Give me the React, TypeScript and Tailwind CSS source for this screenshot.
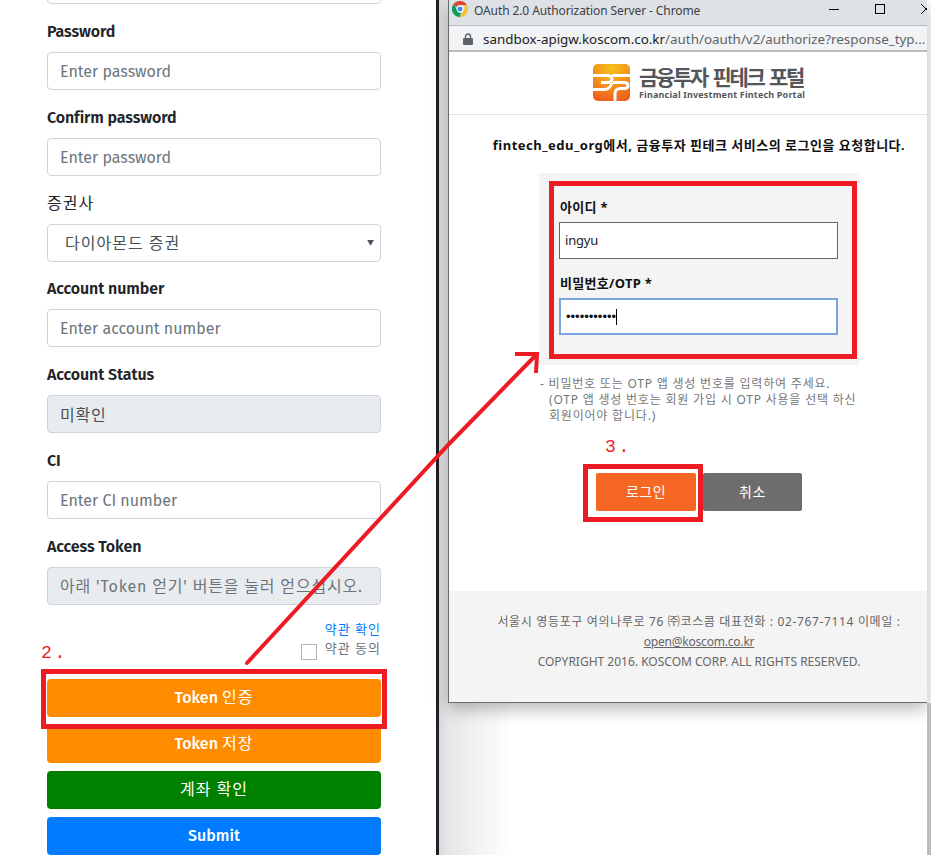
const fieldFont = "font-['Fira_Sans','Noto_Sans','Noto_Sans_CJK_KR',sans-serif]";

function Label({ children, plain }: { children: React.ReactNode; plain?: boolean }) {
  return (
    <label className={`block mb-2 h-6 text-base leading-6 text-[#212529] ${plain ? "font-normal tracking-[1px]" : "font-semibold tracking-[-0.1px]"}`}>
      {children}
    </label>
  );
}

function Field({ placeholder, value, disabled, korean }: { placeholder?: string; value?: string; disabled?: boolean; korean?: boolean }) {
  return (
    <input
      readOnly
      placeholder={placeholder}
      value={value ?? ""}
      className={`block w-full h-[38px] mb-4 px-3 rounded border border-[#ced4da] text-base text-[#495057] placeholder:text-[#6c757d] outline-none ${korean ? "tracking-[0.8px]" : ""} ${disabled ? "bg-[#e9ecef]" : "bg-white"}`}
    />
  );
}

function ActionButton({ color, children }: { color: string; children: React.ReactNode }) {
  return (
    <button className={`block w-full h-[38px] rounded text-base font-medium text-white ${color}`}>{children}</button>
  );
}

function KoreanWord({ children }: { children: React.ReactNode }) {
  return <span className="font-normal tracking-[1px]">{children}</span>;
}

function ChromeIcon() {
  return (
    <svg width="16" height="16" viewBox="0 0 16 16" className="shrink-0">
      <path d="M8 0a8 8 0 0 1 6.9 4H8a4 4 0 0 0-3.8 2.8L1.6 3.1A8 8 0 0 1 8 0z" fill="#db4437" />
      <path d="M14.9 4A8 8 0 0 1 8 16l3.4-5.900A4 4 0 0 0 11.4 4z" fill="#fbc02d" />
      <path d="M8 16A8 8 0 0 1 1.600 3.100l3.400 5.900A4 4 0 0 0 9 11.900z" fill="#0f9d58" />
      <circle cx="8" cy="8" r="3" fill="#4285f4" stroke="#fff" strokeWidth="1" />
    </svg>
  );
}

function LogoMark() {
  return (
    <svg width="37" height="37" viewBox="0 0 37 37" className="shrink-0">
      <defs>
        <radialGradient id="logo-fill" cx="0.5" cy="0.1" r="0.95">
          <stop offset="0" stopColor="#f7c21a" />
          <stop offset="0.5" stopColor="#f3941d" />
          <stop offset="1" stopColor="#ee5a1c" />
        </radialGradient>
      </defs>
      <rect width="37" height="37" rx="5" fill="url(#logo-fill)" />
      <path d="M0 11.500H14c3 0 5 1.500 5 3.500s-2 3.500-5 3.500H8M0 25.500H11c5 0 7-3 8-7M19 11.500H37M20 18.500h11c3 0 4 1 4 3s-1 3-4 3h-4c-3 0-5 2-5 5v8" fill="none" stroke="#fff" strokeWidth="3" />
    </svg>
  );
}

function RedBox({ className }: { className: string }) {
  return <div className={`absolute border-[5px] border-[#ed1c24] pointer-events-none ${className}`} />;
}

export default function App() {
  return (
    <div className={`relative flex w-[931px] h-[855px] overflow-hidden bg-white ${fieldFont}`}>
      {/* signup form, scrolled so its first input is cut off */}
      <div className="w-[436px] shrink-0 pl-[47px] pr-[55px] -mt-[34px]">
        <Field />
        <Label>Password</Label>
        <Field placeholder="Enter password" />
        <Label>Confirm password</Label>
        <Field placeholder="Enter password" />
        <Label plain>증권사</Label>
        <div className="relative mb-[15px]">
          <select className="block w-full h-[38px] pl-[17px] pr-6 pt-[2px] rounded border border-[#ced4da] bg-white text-base tracking-[1px] text-[#495057] appearance-none outline-none">
            <option>다이아몬드 증권</option>
          </select>
          <span className="absolute right-[7px] top-[14px] text-[7px] leading-[9px] text-[#495057]">▼</span>
        </div>
        <Label>Account number</Label>
        <Field placeholder="Enter account number" />
        <Label>Account Status</Label>
        <Field value="미확인" disabled korean />
        <Label>CI</Label>
        <Field placeholder="Enter CI number" />
        <Label>Access Token</Label>
        <Field placeholder="아래 'Token 얻기' 버튼을 눌러 얻으십시오." disabled korean />
        <div className="flex flex-col items-end h-[59px] -mt-[1px] text-[13px] leading-[19px] tracking-[1px]">
          <a className="text-[#007bff]">약관 확인</a>
          <div className="flex items-start gap-2 text-[#6c757d]">
            <span className="mt-[5px] w-4 h-4 border border-[#adb5bd] bg-white" />
            약관 동의
          </div>
        </div>
        <div className="flex flex-col gap-2">
          <ActionButton color="bg-[#ff8c00]">Token <KoreanWord>인증</KoreanWord></ActionButton>
          <ActionButton color="bg-[#ff8c00]">Token <KoreanWord>저장</KoreanWord></ActionButton>
          <ActionButton color="bg-[#008000]"><KoreanWord>계좌 확인</KoreanWord></ActionButton>
          <ActionButton color="bg-[#007bff]">Submit</ActionButton>
        </div>
      </div>

      <div className="w-[3px] shrink-0 bg-[#212125]" />

      {/* page behind the popup */}
      <div className="flex-1 min-w-0 flex bg-[linear-gradient(90deg,#d9d9dd_0,#e6e6e9_9px,#f3f3f4_40px,#fff_75px)]">
        <div className="flex-1 min-w-0 pl-[9px]">
          <div className="h-[703px] border border-[#6b6b6b] border-r-0 border-t-0 bg-white overflow-hidden shadow-[0_6px_16px_rgba(0,0,0,0.28)] font-['Noto_Sans','Noto_Sans_CJK_KR',sans-serif]">
            <div className="flex items-start h-[25px] bg-[#dee1e6] pl-[3px] pt-px text-[#3c4043]">
              <ChromeIcon />
              <span className="ml-[6px] text-xs leading-[20px] tracking-[-0.1px] whitespace-nowrap">OAuth 2.0 Authorization Server - Chrome</span>
              <span className="ml-[129px] mt-[8px] w-[10px] h-px shrink-0 bg-black" />
              <span className="ml-[36px] mt-[3px] w-[10px] h-[10px] shrink-0 border border-black" />
              <svg width="10" height="10" viewBox="0 0 10 10" className="ml-[36px] mt-[3px] shrink-0">
                <path d="M0 0l10 10M10 0L0 10" stroke="#000" strokeWidth="1" />
              </svg>
            </div>
            <div className="flex items-center h-[27px] bg-[#f1f3f4] border-t border-b-2 border-[#b9bcc0] pl-[14px] pt-[2px] text-[13.4px] whitespace-nowrap overflow-hidden">
              <svg width="10" height="12" viewBox="0 0 10 12" className="shrink-0">
                <path d="M2.500 5V3.500a2.500 2.500 0 0 1 5 0V5" fill="none" stroke="#5f6368" strokeWidth="1.400" />
                <rect y="5" width="10" height="7" rx="1" fill="#5f6368" />
              </svg>
              <span className="ml-[10px] text-[#202124]">sandbox-apigw.koscom.co.kr</span>
              <span className="text-[#5f6368]">/auth/oauth/v2/authorize?response_typ...</span>
            </div>

            <div className="w-[500px]">
              <div className="flex justify-center items-start gap-[9px] h-[63px] pt-[12px] border-b border-[#e2e2e2]">
                <LogoMark />
                <div className="w-[166px] font-bold text-[#55565a] whitespace-nowrap">
                  <div className="h-[25px] text-[21px] leading-[25px] tracking-[-2.3px] [word-spacing:3px] font-['Noto_Sans_CJK_KR',sans-serif]">금융투자 핀테크 포털</div>
                  <div className="text-[9px] leading-[12px] tracking-[0.18px]">Financial Investment Fintech Portal</div>
                </div>
              </div>

              <p className="mt-[20px] h-[20px] text-center text-[13px] leading-[20px] tracking-[0.5px] font-bold text-[#111] whitespace-nowrap">
                fintech_edu_org에서, 금융투자 핀테크 서비스의 로그인을 요청합니다.
              </p>

              <div className="mt-[18px] mx-auto w-[320px]">
                <div className="h-[192px] bg-[#f4f4f4] pt-[25px] pl-[20px] pr-[21px]">
                  <div className="h-[24px] pl-px text-[13px] leading-[18px] tracking-[0.3px] font-bold text-[#111]">아이디 *</div>
                  <div className="h-[37px] border border-[#666] bg-white px-[5px] text-[13px] leading-[35px] tracking-[-0.2px] text-[#222]">ingyu</div>
                  <div className="mt-[15px] h-[24px] pl-px text-[13px] leading-[18px] tracking-[0.3px] font-bold text-[#111]">비밀번호/OTP *</div>
                  <div className="flex items-center h-[37px] border-2 border-[#7ba3dd] bg-white pl-[5px] font-['Liberation_Sans',sans-serif] text-[13px] text-[#111]">
                    •••••••••••
                    <span className="w-px h-[16px] bg-black" />
                  </div>
                </div>
                <div className="mt-[11px] pl-px text-xs leading-[16px] tracking-[0.8px] text-[#777] whitespace-nowrap">
                  <div>- 비밀번호 또는 OTP 앱 생성 번호를 입력하여 주세요.</div>
                  <div className="pl-[9px]">(OTP 앱 생성 번호는 회원 가입 시 OTP 사용을 선택 하신</div>
                  <div className="pl-[9px]">회원이어야 합니다.)</div>
                </div>
              </div>

              <div className="mt-[49px] flex justify-center gap-[7px]">
                <button className="w-[100px] h-[38px] rounded-[2px] bg-[#f56723] text-sm tracking-[0.5px] text-white">로그인</button>
                <button className="w-[99px] h-[38px] rounded-[2px] bg-[#6d6d6d] text-sm tracking-[0.5px] text-white">취소</button>
              </div>

              <div className="mt-[80px] h-[111px] bg-[#f4f4f4] pt-[21px] text-center text-xs leading-[20px] text-[#666] whitespace-nowrap">
                <div className="tracking-[0.65px]">서울시 영등포구 여의나루로 76 ㈜코스콤 대표전화 : 02-767-7114 이메일 :</div>
                <div className="underline tracking-[-0.2px]">open@koscom.co.kr</div>
                <div>COPYRIGHT 2016. KOSCOM CORP. ALL RIGHTS RESERVED.</div>
              </div>
            </div>
          </div>
        </div>
        <div className="w-[4px] shrink-0 mt-[703px] bg-[#bdbdbd]" />
      </div>

      {/* red annotations drawn on top of the screenshot */}
      <svg className="absolute left-0 top-0 pointer-events-none" width="931" height="855" viewBox="0 0 931 855">
        <path d="M247 663L449 444L536 355" fill="none" stroke="#ed1c24" strokeWidth="4" strokeLinecap="round" />
        <path d="M515 354H537L536 373" fill="none" stroke="#ed1c24" strokeWidth="4" />
      </svg>
      <RedBox className="left-[41px] top-[669px] w-[346px] h-[60px]" />
      <RedBox className="left-[549px] top-[181px] w-[308px] h-[178px]" />
      <RedBox className="left-[583px] top-[464px] w-[120px] h-[58px]" />
      <span className="absolute left-[41px] top-[643px] text-[18px] leading-5 tracking-[-4px] text-[#ed1c24] font-['Liberation_Mono',monospace]">2 .</span>
      <span className="absolute left-[605px] top-[437px] text-[18px] leading-5 tracking-[-4px] text-[#ed1c24] font-['Liberation_Mono',monospace]">3 .</span>
    </div>
  );
}
